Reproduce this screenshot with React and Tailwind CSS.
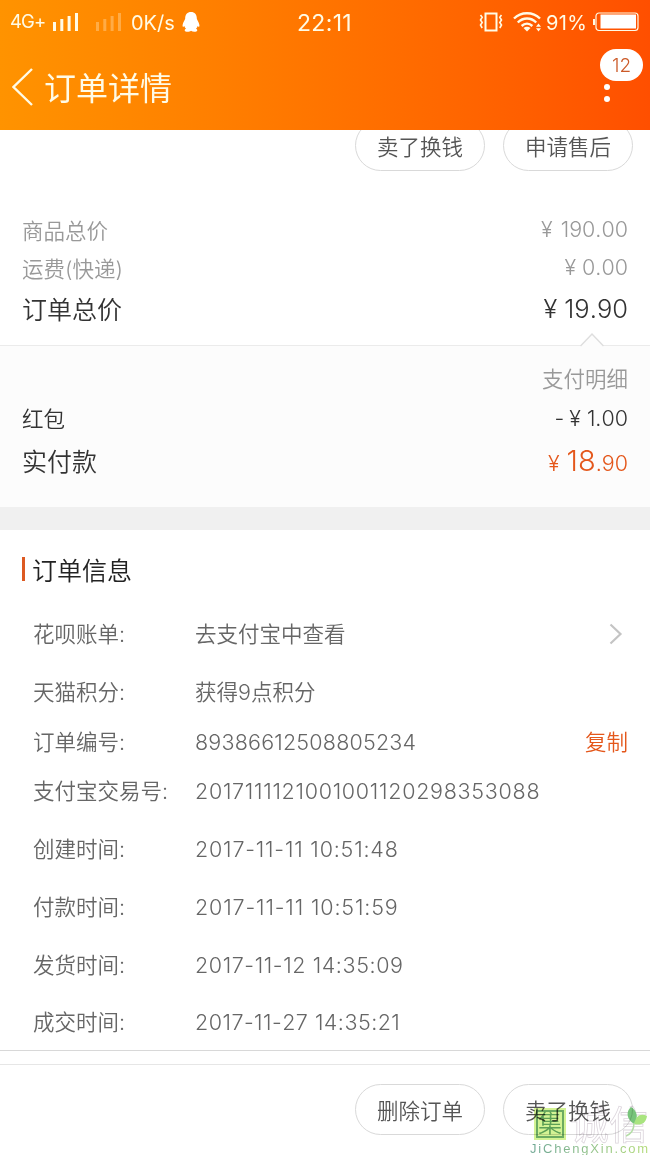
import React from 'react';

const orderInfo = [
  { label: '花呗账单', value: '去支付宝中查看', height: 'h-[58px]', arrow: true },
  { label: '天猫积分', value: '获得9点积分', height: 'h-[58px]' },
  { label: '订单编号', value: '89386612508805234', height: 'h-[42px]', tracking: 'tracking-[0.2px]', copy: true },
  { label: '支付宝交易号', value: '2017111121001001120298353088', height: 'h-[57px]', tracking: 'tracking-[0.72px]' },
  { label: '创建时间', value: '2017-11-11 10:51:48', height: 'h-[58px]', tracking: 'tracking-[0.82px]' },
  { label: '付款时间', value: '2017-11-11 10:51:59', height: 'h-[58px]', tracking: 'tracking-[0.87px]' },
  { label: '发货时间', value: '2017-11-12 14:35:09', height: 'h-[58px]', tracking: 'tracking-[0.6px]' },
  { label: '成交时间', value: '2017-11-27 14:35:21', height: 'h-[56px]', tracking: 'tracking-[0.48px]' },
];

const PillButton = ({ children }) => (
  <button className="flex h-[51px] w-[130px] items-center justify-center rounded-full border border-[#d9d9d9] pt-[3px] text-[21.5px] text-[#555]">
    {children}
  </button>
);

const SignalBars = ({ className }) => (
  <svg className={className} width="26" height="19" viewBox="0 0 26 19" fill="currentColor">
    <rect x="0" y="9" width="3" height="9" />
    <rect x="7.3" y="6" width="3" height="12" />
    <rect x="14.6" y="3" width="3" height="15" />
    <rect x="22" y="0" width="3" height="18" />
  </svg>
);

const StatusBar = () => (
  <div className="grid h-11 grid-cols-[1fr_auto_1fr] items-center pl-[10px] pr-[11px] font-normal text-[#fffbe6]">
    <div className="flex items-center">
      <span className="w-[43px] text-[18.5px] tracking-[-0.9px]">4G+</span>
      <SignalBars />
      <SignalBars className="ml-[17px] opacity-30" />
      <span className="ml-[9px] w-[46px] whitespace-nowrap pt-[2px] text-[20px]">0K/s</span>
      <svg className="ml-[5px] text-white" width="18" height="20" viewBox="0 0 18 20" fill="currentColor">
        <path d="M9 0C5.4 0 3 2.700 3.200 6.500C3 8 1 10.300 .6 13C.4 15 1.100 15.400 2.300 13.900C2.600 15 3.200 16 4 16.800C2.200 17.600 2.200 19.500 4.500 19.700C6.500 19.900 8 19.500 9 18.700C10 19.500 11.500 19.900 13.500 19.700C15.800 19.500 15.800 17.600 14 16.800C14.800 16 15.400 15 15.700 13.900C16.900 15.400 17.600 15 17.400 13C17 10.300 15 8 14.800 6.500C15 2.700 12.600 0 9 0Z" />
      </svg>
    </div>
    <span className="pt-[2px] text-[23px] tracking-[0.3px]">22:11</span>
    <div className="flex items-center justify-end">
      <svg width="24" height="20" viewBox="0 0 24 20" fill="none" stroke="currentColor">
        <rect x="6.500" y="1.500" width="11" height="17" strokeWidth="2" />
        <path d="M1.500 3L3.200 5.300L1.500 8L3.200 10.500L1.500 13L3.200 16M22.500 3L20.800 5.300L22.500 8L20.800 10.500L22.500 13L20.800 16" strokeWidth="1.600" />
      </svg>
      <svg className="ml-[10px]" width="28" height="20" viewBox="0 0 28 20" fill="none" stroke="currentColor" strokeWidth="2.400">
        <path d="M1 6.500C8 -.5 20 -.5 27 6.500M4.800 10.500C10 5.200 18 5.200 23.200 10.500M8.600 14C11.800 11 16.200 11 19.400 14" />
        <path d="M10.500 16C12.500 14.300 15.500 14.300 17.500 16L14 19.500Z" fill="currentColor" stroke="none" />
        <path d="M25.500 11.500L28 14.800H23ZM25.500 19.500L28 16.200H23Z" fill="currentColor" stroke="none" />
      </svg>
      <span className="ml-[5px] w-[43px] whitespace-nowrap pt-[2px] text-[20px] tracking-[0.3px]">91%</span>
      <svg className="ml-[4px]" width="46" height="20" viewBox="0 0 46 20" fill="none" stroke="currentColor">
        <path d="M1 7V13" strokeWidth="2" />
        <rect x="3" y="1" width="42" height="17.500" rx="3" strokeWidth="1.200" />
        <rect x="7.500" y="2.500" width="35.500" height="14" fill="#fff" stroke="none" />
      </svg>
    </div>
  </div>
);

const Header = () => (
  <header className="h-[130px] bg-gradient-to-r from-[#ff9300] to-[#ff4f00]">
    <StatusBar />
    <div className="flex h-[86px] items-center justify-between pl-3 pr-[7px]">
      <div className="flex items-center gap-[11px] text-[#fffbe6]">
        <svg width="21" height="38" viewBox="0 0 21 38" fill="none" stroke="currentColor" strokeWidth="2.400">
          <path d="M20 1L1.500 19L20 37" />
        </svg>
        <h1 className="pt-[3px] text-[32px] font-normal leading-none">订单详情</h1>
      </div>
      <div className="flex w-[43px] flex-col self-start pt-[5px]">
        <span className="flex h-8 items-center justify-center rounded-full bg-white pt-[2px] text-[19px] text-[#cc5a28]">12</span>
        <span className="ml-1 mt-[3px] h-[6px] w-[6px] rounded-full bg-white"></span>
        <span className="ml-1 mt-[6px] h-[6px] w-[6px] rounded-full bg-white"></span>
      </div>
    </div>
  </header>
);

const Watermark = () => (
  <div className="absolute bottom-0 right-0 h-[47px] w-[122px] mix-blend-multiply">
    <div className="flex items-start pl-[6px]">
      <span className="flex h-[32px] w-[32px] items-center justify-center bg-[#d3f394]">
        <span className="flex h-[28px] w-[28px] items-center justify-center border-2 border-[#6cab62] text-[24px] leading-none text-[#5da056]">集</span>
      </span>
      <span className="ml-[4px] whitespace-nowrap text-[39px] font-normal leading-[34px] text-white/50 [-webkit-text-stroke:0.8px_#ddd6dd]">诚信</span>
    </div>
    <svg className="absolute right-[2px] top-[-1px]" width="22" height="30" viewBox="0 0 22 30">
      <path d="M8 17C0 12 0 4 5 0C11 4 13 10 8 17Z" fill="#77c47a" />
      <path d="M8 17C10 8 15 6 21 9C20 16 15 19 8 17Z" fill="#a9e47f" />
      <path d="M8 16C8 22 5 27 0 29" fill="none" stroke="#b4dda6" strokeWidth="1.500" />
    </svg>
    <p className="absolute bottom-[-1px] left-[2px] whitespace-nowrap bg-gradient-to-r from-[#6fa794] to-[#b4dc78] bg-clip-text font-['Liberation_Sans'] text-[13px] font-normal leading-[14px] tracking-[1.8px] text-transparent">JiChengXin.com</p>
  </div>
);

const App = () => {
  return (
    <div className="relative flex h-[1155px] w-[650px] flex-col overflow-hidden bg-white font-['Inter','Noto_Sans_CJK_SC',sans-serif] font-[350] [font-kerning:none] [font-feature-settings:'calt'_0]">
      <Header />

      <section className="h-[216px] overflow-hidden border-b border-[#ebebeb]">
        <div className="-mt-[10px] flex justify-end gap-[18px] pr-[17px]">
          <PillButton>卖了换钱</PillButton>
          <PillButton>申请售后</PillButton>
        </div>
        <div className="mt-10 px-[22px] text-[21.5px] text-[#999]">
          <div className="flex h-[38px] items-center justify-between">
            <span className="pt-[2px]">商品总价</span>
            <span className="pb-[2px]"><span className="mr-[2px]">¥</span> 190.00</span>
          </div>
          <div className="flex h-[38px] items-center justify-between">
            <span className="pt-[2px]">运费(快递)</span>
            <span className="pb-[2px]">¥ 0.00</span>
          </div>
          <div className="flex h-[44px] items-center justify-between text-[25px] text-[#333]">
            <span className="pt-[3px]">订单总价</span>
            <span className="text-[25.5px]">¥ 19.90</span>
          </div>
        </div>
      </section>

      <section className="relative h-[161px] bg-[#fcfcfc] px-[22px] pt-[14px] text-[#333]">
        <svg className="absolute right-[46px] top-[-14px]" width="24" height="15" viewBox="0 0 24 15" fill="#fcfcfc" stroke="#dedede" strokeWidth="1.500">
          <path d="M.5 14L12 2L23.500 14" />
        </svg>
        <div className="flex h-[38px] items-center justify-end text-[21.5px] text-[#999]">支付明细</div>
        <div className="flex h-[40px] items-center justify-between text-[21.5px]">
          <span className="pt-[2px]">红包</span>
          <span><span className="mr-[5px]">-</span>¥ 1.00</span>
        </div>
        <div className="flex h-[46px] items-center justify-between">
          <span className="pt-[3px] text-[25px]">实付款</span>
          <span className="text-[21.5px] text-[#e4571b]"><span className="mr-[1px]">¥</span> <span className="text-[29px]">18</span>.90</span>
        </div>
      </section>

      <div className="h-[23px] bg-[#f0f0f0]"></div>

      <section className="h-[521px] border-b border-[#d8d8d8] px-[22px]">
        <div className="flex h-[75px] items-center gap-[7px] pt-[5px]">
          <span className="mb-[2px] h-6 w-[3px] bg-[#dd5a22]"></span>
          <h2 className="pt-[3px] text-[25px] text-[#222]">订单信息</h2>
        </div>
        {orderInfo.map((item) => (
          <div key={item.label} className={`flex items-center pl-[11px] text-[21.5px] text-[#666] ${item.height}`}>
            <span className="w-[162px] shrink-0">{item.label}:</span>
            <span className={`grow whitespace-nowrap ${item.tracking || ''}`}>{item.value}</span>
            {item.copy && <button className="text-[#e4571b]">复制</button>}
            {item.arrow && (
              <svg className="mr-[5px]" width="14" height="22" viewBox="0 0 14 22" fill="none" stroke="#c4c4c4" strokeWidth="2.200">
                <path d="M1.500 1.500L11.500 11L1.500 20.500" />
              </svg>
            )}
          </div>
        ))}
      </section>

      <footer className="mt-[13px] h-[91px] border-t border-[#e6e6e6] pt-[19px]">
        <div className="flex justify-end gap-[18px] pr-[17px]">
          <PillButton>删除订单</PillButton>
          <PillButton>卖了换钱</PillButton>
        </div>
      </footer>

      <Watermark />
    </div>
  );
};

export default App;
